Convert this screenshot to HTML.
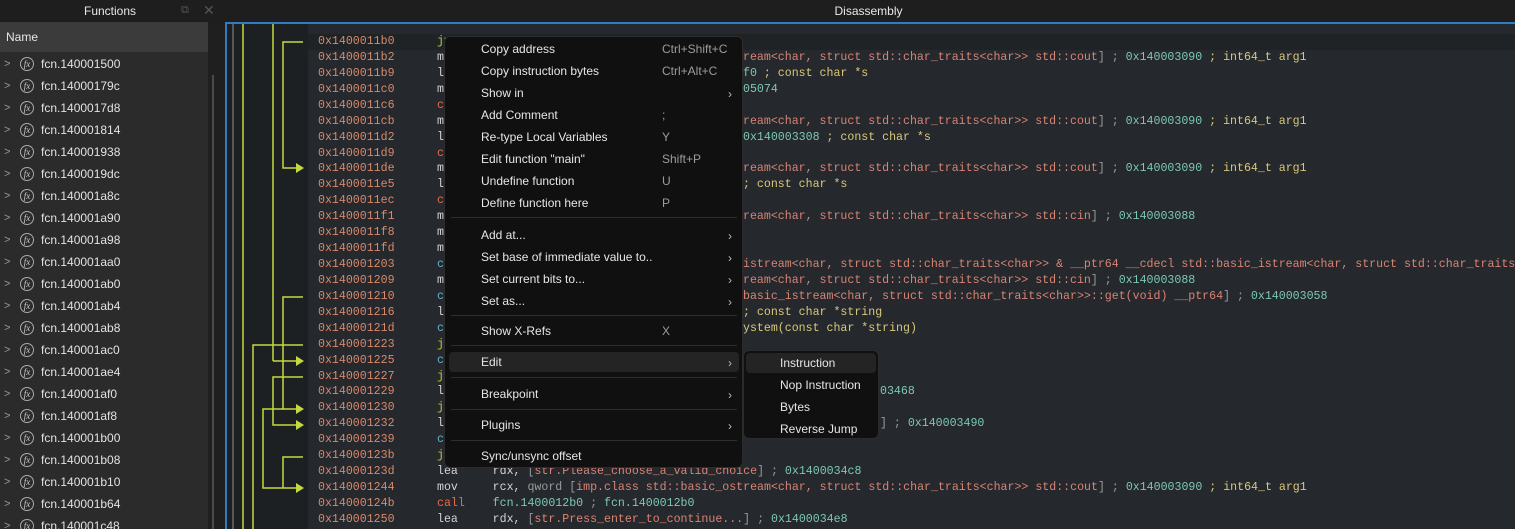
<!DOCTYPE html>
<html><head><meta charset="utf-8"><style>
*{margin:0;padding:0;box-sizing:border-box}
html,body{width:1515px;height:529px;overflow:hidden}
body{background:#1f1f1f;position:relative;font-family:"Liberation Sans",sans-serif}
.abs{position:absolute}
.side{left:0;top:22px;width:208px;height:507px;background:#2b2b2b}
.title{top:0;height:22px;color:#e8e8e8;font-size:12px;line-height:22px;text-align:center;background:#1e1e1e}
.fi{position:absolute;left:0;height:22px;line-height:22px;font-size:12px;color:#e2e2e2;white-space:nowrap}
.fi .ch{position:absolute;left:4px;color:#9a9a9a;font-size:11px}
.fi .ic{position:absolute;left:20px;top:4px;width:14px;height:14px;border:1px solid #aaa;border-radius:50%;font-size:9px;line-height:12px;text-align:center;color:#ccc;font-style:italic;font-family:"Liberation Serif",serif}
.fi .nm{position:absolute;left:41px}
.code{left:225px;top:22px;width:1290px;height:507px;background:#25282c;border-top:2px solid #2d7cc4;border-left:2px solid #2d7cc4}
.gut{left:227px;top:24px;width:81px;height:505px;background:#1d2023}
.row{position:absolute;left:0;height:16px;font-family:"Liberation Mono",monospace;font-size:11.6px;line-height:16px;white-space:pre}
.v{position:absolute;left:306px;top:0}
.v2{position:absolute;left:443px;top:0}
.ad{color:#d98a6a}
.y{color:#d9c97a}.t{color:#7cc9b3}.s{color:#d98474}.g{color:#9a9a9a}.w{color:#d4d4d4}.r{color:#e56a4a}.jg{color:#b5cc3c}.tc{color:#5fb3c9}
.menu{left:444px;top:36px;width:299px;height:432px;background:#101010;border:1px solid #2c2c2c;border-radius:6px}
.mi{position:absolute;left:36px;font-size:12px;color:#e6e6e6;height:22px;line-height:22px;white-space:nowrap}
.sc{position:absolute;left:217px;font-size:12px;color:#9c9c9c;line-height:22px}
.ar{position:absolute;left:283px;color:#bbb;font-size:12px;line-height:22px}
.sep{position:absolute;left:6px;width:286px;height:1px;background:#2e2e2e}
.sub{left:743px;top:350px;width:136px;height:89px;background:#101010;border:1px solid #2c2c2c;border-radius:6px}
</style></head><body>
<div class="abs title" style="left:0;width:220px">Functions</div>
<div class="abs" style="left:181px;top:4px;color:#555;font-size:11px">⧉</div>
<div class="abs" style="left:203px;top:2px;color:#555;font-size:14px">✕</div>
<div class="abs title" style="left:222px;width:1293px">Disassembly</div>
<div class="abs side"></div>
<div class="abs" style="left:0;top:22px;width:208px;height:30px;background:#3b3b3b;color:#e6e6e6;font-size:12px;line-height:30px;padding-left:6px">Name</div>
<div class="abs" style="left:212px;top:75px;width:2px;height:454px;background:#4a4a4a"></div>
<div class="abs" style="left:0;top:53px;width:208px;height:476px;overflow:hidden">
<div class="fi" style="top:0"><span class="ch">&gt;</span><span class="ic">fx</span><span class="nm">fcn.140001500</span></div>
<div class="fi" style="top:22px"><span class="ch">&gt;</span><span class="ic">fx</span><span class="nm">fcn.14000179c</span></div>
<div class="fi" style="top:44px"><span class="ch">&gt;</span><span class="ic">fx</span><span class="nm">fcn.1400017d8</span></div>
<div class="fi" style="top:66px"><span class="ch">&gt;</span><span class="ic">fx</span><span class="nm">fcn.140001814</span></div>
<div class="fi" style="top:88px"><span class="ch">&gt;</span><span class="ic">fx</span><span class="nm">fcn.140001938</span></div>
<div class="fi" style="top:110px"><span class="ch">&gt;</span><span class="ic">fx</span><span class="nm">fcn.1400019dc</span></div>
<div class="fi" style="top:132px"><span class="ch">&gt;</span><span class="ic">fx</span><span class="nm">fcn.140001a8c</span></div>
<div class="fi" style="top:154px"><span class="ch">&gt;</span><span class="ic">fx</span><span class="nm">fcn.140001a90</span></div>
<div class="fi" style="top:176px"><span class="ch">&gt;</span><span class="ic">fx</span><span class="nm">fcn.140001a98</span></div>
<div class="fi" style="top:198px"><span class="ch">&gt;</span><span class="ic">fx</span><span class="nm">fcn.140001aa0</span></div>
<div class="fi" style="top:220px"><span class="ch">&gt;</span><span class="ic">fx</span><span class="nm">fcn.140001ab0</span></div>
<div class="fi" style="top:242px"><span class="ch">&gt;</span><span class="ic">fx</span><span class="nm">fcn.140001ab4</span></div>
<div class="fi" style="top:264px"><span class="ch">&gt;</span><span class="ic">fx</span><span class="nm">fcn.140001ab8</span></div>
<div class="fi" style="top:286px"><span class="ch">&gt;</span><span class="ic">fx</span><span class="nm">fcn.140001ac0</span></div>
<div class="fi" style="top:308px"><span class="ch">&gt;</span><span class="ic">fx</span><span class="nm">fcn.140001ae4</span></div>
<div class="fi" style="top:330px"><span class="ch">&gt;</span><span class="ic">fx</span><span class="nm">fcn.140001af0</span></div>
<div class="fi" style="top:352px"><span class="ch">&gt;</span><span class="ic">fx</span><span class="nm">fcn.140001af8</span></div>
<div class="fi" style="top:374px"><span class="ch">&gt;</span><span class="ic">fx</span><span class="nm">fcn.140001b00</span></div>
<div class="fi" style="top:396px"><span class="ch">&gt;</span><span class="ic">fx</span><span class="nm">fcn.140001b08</span></div>
<div class="fi" style="top:418px"><span class="ch">&gt;</span><span class="ic">fx</span><span class="nm">fcn.140001b10</span></div>
<div class="fi" style="top:440px"><span class="ch">&gt;</span><span class="ic">fx</span><span class="nm">fcn.140001b64</span></div>
<div class="fi" style="top:462px"><span class="ch">&gt;</span><span class="ic">fx</span><span class="nm">fcn.140001c48</span></div>
</div>

<div class="abs code"></div>
<div class="abs gut"></div>
<div class="abs" style="left:308px;top:34px;width:1207px;height:16px;background:#1f2326"></div>
<svg class="abs" style="left:0;top:0" width="1515" height="529">
<g stroke-width="1.5" fill="none">
<line x1="233" y1="24" x2="233" y2="529" stroke="#6a6a6a"/>
<line x1="243" y1="24" x2="243" y2="529" stroke="#c6d83e"/>
<line x1="273" y1="24" x2="273" y2="361" stroke="#c6d83e"/>
<polyline points="273,361 298,361" stroke="#c6d83e"/>
<polyline points="303,42 283,42 283,168 298,168" stroke="#c6d83e"/>
<polyline points="303,297 283,297 283,409 298,409" stroke="#c6d83e"/>
<polyline points="303,345 253,345 253,529" stroke="#c6d83e"/>
<polyline points="303,377 273,377 273,425 298,425" stroke="#c6d83e"/>
<polyline points="283,409 263,409 263,488 298,488" stroke="#c6d83e"/>
<polyline points="303,457 283,457 283,488" stroke="#c6d83e"/>
</g>
<g fill="#c6d83e">
<polygon points="296,163 304,168 296,173"/>
<polygon points="296,356 304,361 296,366"/>
<polygon points="296,404 304,409 296,414"/>
<polygon points="296,420 304,425 296,430"/>
<polygon points="296,483 304,488 296,493"/>
</g>
</svg>
<div class="abs" style="left:318px;top:34px;width:1200px;height:495px">
<div class="row ad" style="top:0">0x1400011b0</div>
<div class="row ad" style="top:15.93px">0x1400011b2</div>
<div class="row ad" style="top:31.86px">0x1400011b9</div>
<div class="row ad" style="top:47.79px">0x1400011c0</div>
<div class="row ad" style="top:63.72px">0x1400011c6</div>
<div class="row ad" style="top:79.65px">0x1400011cb</div>
<div class="row ad" style="top:95.58px">0x1400011d2</div>
<div class="row ad" style="top:111.51px">0x1400011d9</div>
<div class="row ad" style="top:127.44px">0x1400011de</div>
<div class="row ad" style="top:143.37px">0x1400011e5</div>
<div class="row ad" style="top:159.3px">0x1400011ec</div>
<div class="row ad" style="top:175.23px">0x1400011f1</div>
<div class="row ad" style="top:191.16px">0x1400011f8</div>
<div class="row ad" style="top:207.09px">0x1400011fd</div>
<div class="row ad" style="top:223.02px">0x140001203</div>
<div class="row ad" style="top:238.95px">0x140001209</div>
<div class="row ad" style="top:254.88px">0x140001210</div>
<div class="row ad" style="top:270.81px">0x140001216</div>
<div class="row ad" style="top:286.74px">0x14000121d</div>
<div class="row ad" style="top:302.67px">0x140001223</div>
<div class="row ad" style="top:318.6px">0x140001225</div>
<div class="row ad" style="top:334.53px">0x140001227</div>
<div class="row ad" style="top:350.46px">0x140001229</div>
<div class="row ad" style="top:366.39px">0x140001230</div>
<div class="row ad" style="top:382.32px">0x140001232</div>
<div class="row ad" style="top:398.25px">0x140001239</div>
<div class="row ad" style="top:414.18px">0x14000123b</div>
<div class="row ad" style="top:430.11px">0x14000123d</div>
<div class="row ad" style="top:446.04px">0x140001244</div>
<div class="row ad" style="top:461.97px">0x14000124b</div>
<div class="row ad" style="top:477.9px">0x140001250</div>
</div>
<div class="abs" style="left:437px;top:34px;width:1078px;height:495px;overflow:hidden">
<div class="row jg" style="top:0;width:1078px">jmp</div>
<div class="row w" style="top:15.93px;width:1078px">mov<span class="v"><span class="s">ream&lt;char, struct std::char_traits&lt;char&gt;&gt; std::cout</span><span class="g">] ; </span><span class="t">0x140003090</span><span class="y"> ; int64_t arg1</span></span></div>
<div class="row w" style="top:31.86px;width:1078px">lea<span class="v"><span class="t">f0</span><span class="y"> ; const char *s</span></span></div>
<div class="row w" style="top:47.79px;width:1078px">mov<span class="v"><span class="t">05074</span></span></div>
<div class="row r" style="top:63.72px">call</div>
<div class="row w" style="top:79.65px;width:1078px">mov<span class="v"><span class="s">ream&lt;char, struct std::char_traits&lt;char&gt;&gt; std::cout</span><span class="g">] ; </span><span class="t">0x140003090</span><span class="y"> ; int64_t arg1</span></span></div>
<div class="row w" style="top:95.58px;width:1078px">lea<span class="v"><span class="t">0x140003308</span><span class="y"> ; const char *s</span></span></div>
<div class="row r" style="top:111.51px">call</div>
<div class="row w" style="top:127.44px;width:1078px">mov<span class="v"><span class="s">ream&lt;char, struct std::char_traits&lt;char&gt;&gt; std::cout</span><span class="g">] ; </span><span class="t">0x140003090</span><span class="y"> ; int64_t arg1</span></span></div>
<div class="row w" style="top:143.37px;width:1078px">lea<span class="v"><span class="y">; const char *s</span></span></div>
<div class="row r" style="top:159.3px">call</div>
<div class="row w" style="top:175.23px;width:1078px">mov<span class="v"><span class="s">ream&lt;char, struct std::char_traits&lt;char&gt;&gt; std::cin</span><span class="g">] ; </span><span class="t">0x140003088</span></span></div>
<div class="row w" style="top:191.16px">mov</div>
<div class="row w" style="top:207.09px">mov</div>
<div class="row tc" style="top:223.02px;width:1078px">call<span class="v"><span class="s">istream&lt;char, struct std::char_traits&lt;char&gt;&gt; &amp; __ptr64 __cdecl std::basic_istream&lt;char, struct std::char_traits</span></span></div>
<div class="row w" style="top:238.95px;width:1078px">mov<span class="v"><span class="s">ream&lt;char, struct std::char_traits&lt;char&gt;&gt; std::cin</span><span class="g">] ; </span><span class="t">0x140003088</span></span></div>
<div class="row tc" style="top:254.88px;width:1078px">call<span class="v"><span class="s">basic_istream&lt;char, struct std::char_traits&lt;char&gt;&gt;::get(void) __ptr64</span><span class="g">] ; </span><span class="t">0x140003058</span></span></div>
<div class="row w" style="top:270.81px;width:1078px">lea<span class="v"><span class="y">; const char *string</span></span></div>
<div class="row tc" style="top:286.74px;width:1078px">call<span class="v"><span class="y">ystem(const char *string)</span></span></div>
<div class="row jg" style="top:302.67px">jmp</div>
<div class="row tc" style="top:318.6px">cmp</div>
<div class="row jg" style="top:334.53px">jne</div>
<div class="row w" style="top:350.46px;width:1078px">lea<span class="v2"><span class="t">03468</span></span></div>
<div class="row jg" style="top:366.39px">jmp</div>
<div class="row w" style="top:382.32px;width:1078px">lea<span class="v2"><span class="g">] ; </span><span class="t">0x140003490</span></span></div>
<div class="row tc" style="top:398.25px">cmp</div>
<div class="row jg" style="top:414.18px">jmp</div>
<div class="row w" style="top:430.11px">lea     rdx, <span class="g">[</span><span class="s">str.Please_choose_a_valid_choice</span><span class="g">] ; </span><span class="t">0x1400034c8</span></div>
<div class="row w" style="top:446.04px">mov     rcx, <span class="g">qword [</span><span class="s">imp.class std::basic_ostream&lt;char, struct std::char_traits&lt;char&gt;&gt; std::cout</span><span class="g">] ; </span><span class="t">0x140003090</span><span class="y"> ; int64_t arg1</span></div>
<div class="row r" style="top:461.97px">call    <span class="t">fcn.1400012b0</span><span class="g"> ; </span><span class="t">fcn.1400012b0</span></div>
<div class="row w" style="top:477.9px">lea     rdx, <span class="g">[</span><span class="s">str.Press_enter_to_continue...</span><span class="g">] ; </span><span class="t">0x1400034e8</span></div>
</div>

<div class="abs menu">
<div class="mi" style="top:1px">Copy address</div><div class="sc" style="top:1px">Ctrl+Shift+C</div>
<div class="mi" style="top:23px">Copy instruction bytes</div><div class="sc" style="top:23px">Ctrl+Alt+C</div>
<div class="mi" style="top:45px">Show in</div><div class="ar" style="top:46px">›</div>
<div class="mi" style="top:67px">Add Comment</div><div class="sc" style="top:67px">;</div>
<div class="mi" style="top:89px">Re-type Local Variables</div><div class="sc" style="top:89px">Y</div>
<div class="mi" style="top:111px">Edit function "main"</div><div class="sc" style="top:111px">Shift+P</div>
<div class="mi" style="top:133px">Undefine function</div><div class="sc" style="top:133px">U</div>
<div class="mi" style="top:155px">Define function here</div><div class="sc" style="top:155px">P</div>
<div class="sep" style="top:180px"></div>
<div class="mi" style="top:187px">Add at...</div><div class="ar" style="top:188px">›</div>
<div class="mi" style="top:209px">Set base of immediate value to..</div><div class="ar" style="top:210px">›</div>
<div class="mi" style="top:231px">Set current bits to...</div><div class="ar" style="top:232px">›</div>
<div class="mi" style="top:253px">Set as...</div><div class="ar" style="top:254px">›</div>
<div class="sep" style="top:278px"></div>
<div class="mi" style="top:283px">Show X-Refs</div><div class="sc" style="top:283px">X</div>
<div class="sep" style="top:308px"></div>
<div style="position:absolute;left:4px;top:315px;width:290px;height:20px;background:#242424;border-radius:4px"></div>
<div class="mi" style="top:314px">Edit</div><div class="ar" style="top:315px">›</div>
<div class="sep" style="top:340px"></div>
<div class="mi" style="top:346px">Breakpoint</div><div class="ar" style="top:347px">›</div>
<div class="sep" style="top:372px"></div>
<div class="mi" style="top:377px">Plugins</div><div class="ar" style="top:378px">›</div>
<div class="sep" style="top:403px"></div>
<div class="mi" style="top:408px">Sync/unsync offset</div>
</div>
<div class="abs sub">
<div style="position:absolute;left:2px;top:2px;width:130px;height:20px;background:#242424;border-radius:4px"></div>
<div class="mi" style="top:1px;left:36px">Instruction</div>
<div class="mi" style="top:23px;left:36px">Nop Instruction</div>
<div class="mi" style="top:45px;left:36px">Bytes</div>
<div class="mi" style="top:67px;left:36px">Reverse Jump</div>
</div>
</body></html>
